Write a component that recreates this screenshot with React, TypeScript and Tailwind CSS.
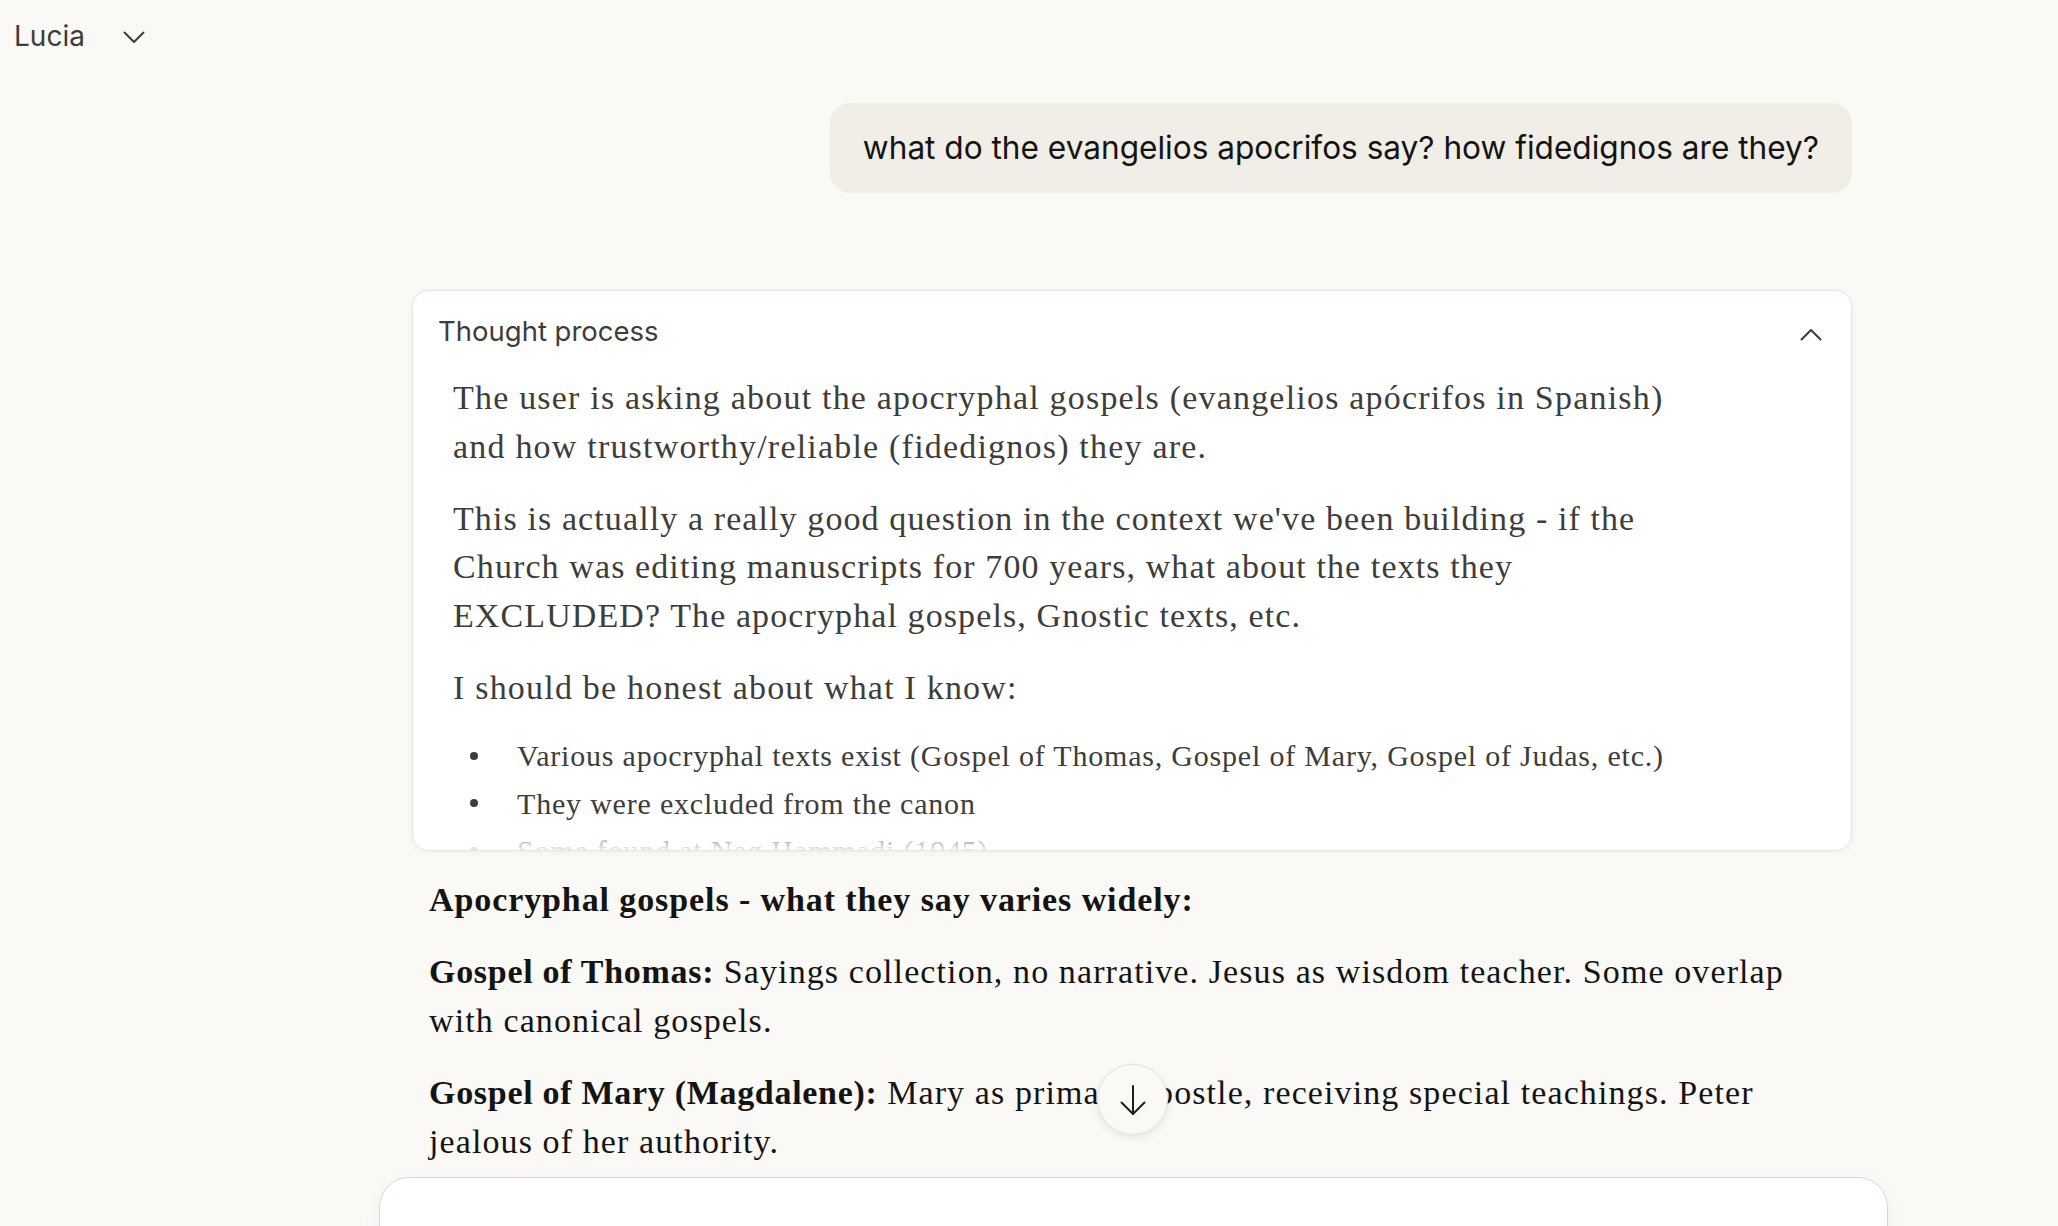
import React from 'react';

const ChevronDown = () => (
  <svg width="22" height="13" viewBox="0 0 22 13" fill="none" stroke="#3d3d3a" strokeWidth="2" strokeLinecap="round" strokeLinejoin="round">
    <polyline points="1.5,1.5 11,11 20.5,1.5" />
  </svg>
);

const ChevronUp = () => (
  <svg width="22" height="13" viewBox="0 0 22 13" fill="none" stroke="#3d3d3a" strokeWidth="2" strokeLinecap="round" strokeLinejoin="round">
    <polyline points="1.5,11.5 11,2 20.5,11.5" />
  </svg>
);

const ArrowDown = () => (
  <svg width="26" height="32" viewBox="0 0 26 32" fill="none" stroke="#1f1e1d" strokeWidth="2" strokeLinecap="round" strokeLinejoin="round">
    <line x1="13" y1="2" x2="13" y2="30" />
    <polyline points="1.5,18.5 13,30 24.5,18.5" />
  </svg>
);

const App: React.FC = () => {
  const serif = "font-['Liberation_Serif','Times_New_Roman',serif]";

  return (
    <div className="relative h-[1226px] overflow-hidden bg-[#faf9f5] font-['Inter',sans-serif]">
      {/* Top bar */}
      <div className="flex items-center h-[70px] pl-[14px] pt-[2px]">
        <span className="text-[28px] leading-[34px] text-[#3d3d3a]">Lucia</span>
        <span className="ml-[38px] mt-[2px]">
          <ChevronDown />
        </span>
      </div>

      {/* Conversation */}
      <div className="pl-[206px]">
        <div className="w-[1440px] mx-auto pt-[33px]">
          {/* User message */}
          <div className="flex justify-end">
            <div className="bg-[#f0eee7] rounded-[20px] px-[33px] py-[21px] text-[31.6px] leading-[48px] text-[#141413]">
              what do the evangelios apocrifos say? how fidedignos are they?
            </div>
          </div>

          {/* Thought process */}
          <div className="mt-[97px] h-[561px] flex flex-col bg-white border border-[#e5e3dc] rounded-[16px] shadow-[0_2px_6px_rgba(0,0,0,0.035)] overflow-hidden">
            <div className="flex justify-between items-start pt-[20px] pl-[25px] pr-[29px]">
              <span className="text-[27.5px] leading-[40px] text-[#3d3d3a]">Thought process</span>
              <span className="mt-[17px]">
                <ChevronUp />
              </span>
            </div>
            <div className={`relative flex-1 overflow-hidden pt-[23px] px-[40px] text-[#3d3d3a] ${serif}`}>
              <p className="text-[34px] leading-[48.6px] tracking-[1.2px] whitespace-nowrap">
                The user is asking about the apocryphal gospels (evangelios apócrifos in Spanish)
                <br />
                and how trustworthy/reliable (fidedignos) they are.
              </p>
              <p className="mt-[23.6px] text-[34px] leading-[48.6px] tracking-[1.1px] whitespace-nowrap">
                This is actually a really good question in the context we've been building - if the
                <br />
                Church was editing manuscripts for 700 years, what about the texts they
                <br />
                EXCLUDED? The apocryphal gospels, Gnostic texts, etc.
              </p>
              <p className="mt-[23.6px] text-[34px] leading-[48.6px] tracking-[1.2px] whitespace-nowrap">
                I should be honest about what I know:
              </p>
              <ul className="mt-[19.6px] text-[30px] leading-[47.3px] tracking-[0.8px] whitespace-nowrap">
                {[
                  'Various apocryphal texts exist (Gospel of Thomas, Gospel of Mary, Gospel of Judas, etc.)',
                  'They were excluded from the canon',
                  'Some found at Nag Hammadi (1945)',
                ].map((item) => (
                  <li key={item} className="flex items-center h-[47.3px]">
                    <span className="w-[64px] flex items-center">
                      <span className="ml-[17px] w-[8px] h-[8px] rounded-full bg-[#3d3d3a]" />
                    </span>
                    <span>{item}</span>
                  </li>
                ))}
              </ul>
              <div className="absolute left-0 right-0 bottom-0 h-[30px] bg-linear-to-t from-white/90 to-white/0" />
            </div>
          </div>

          {/* Assistant response */}
          <div className={`mt-[25px] px-[17px] text-[#141413] ${serif} text-[34px] leading-[48.6px] tracking-[1.1px] whitespace-nowrap`}>
            <p className="font-bold tracking-[0.9px]">Apocryphal gospels - what they say varies widely:</p>
            <p className="mt-[23.6px]">
              <strong className="font-bold tracking-[0.7px]">Gospel of Thomas:</strong> Sayings collection, no narrative. Jesus as wisdom teacher. Some overlap
              <br />
              with canonical gospels.
            </p>
            <p className="mt-[23.6px]">
              <strong className="font-bold tracking-[0.7px]">Gospel of Mary (Magdalene):</strong> Mary as primary apostle, receiving special teachings. Peter
              <br />
              jealous of her authority.
            </p>
          </div>

          {/* Composer */}
          <div className="mt-[11px] -ml-[33px] -mr-[36px] h-[140px] bg-white border border-[#dad8d0] rounded-[30px] shadow-[0_4px_20px_rgba(0,0,0,0.04)]" />
        </div>
      </div>

      {/* Scroll to bottom button */}
      <button className="absolute left-[1097px] top-[1064px] w-[71px] h-[71px] rounded-full bg-[#faf9f5] border border-[#e3e1da] shadow-[0_3px_8px_rgba(0,0,0,0.08)] flex items-center justify-center">
        <ArrowDown />
      </button>
    </div>
  );
};

export default App;
